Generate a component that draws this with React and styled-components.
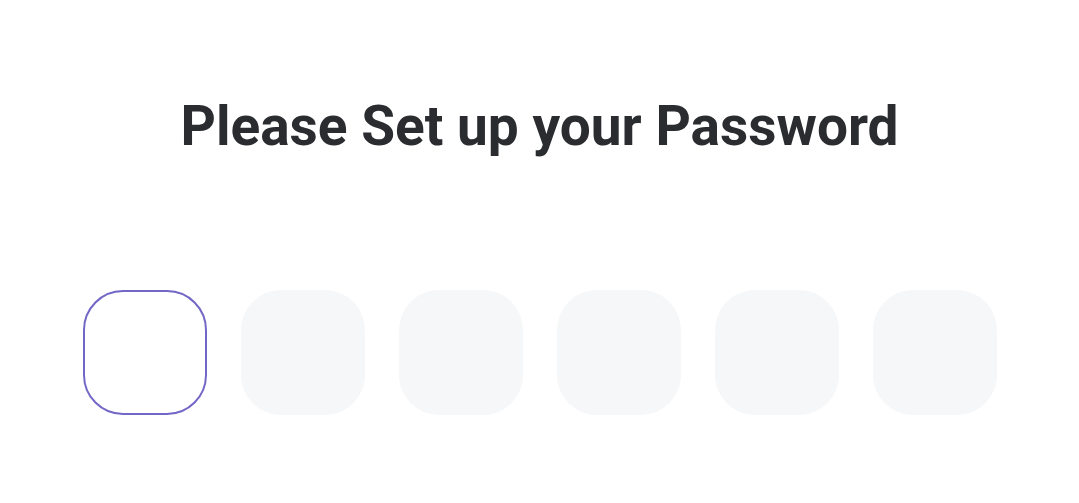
import React from "react";
import styled, { createGlobalStyle } from "styled-components";

const Global = createGlobalStyle`
  html, body { margin: 0; padding: 0; background: #ffffff; }
  body { font-family: Roboto, "Liberation Sans", sans-serif; }
`;

const Page = styled.main`
  width: 1079px;
  height: 503px;
  display: flex;
  flex-direction: column;
  align-items: center;
  box-sizing: border-box;
  padding-top: 93px;
`;

const Title = styled.h1`
  margin: 0;
  font-family: Roboto, "Liberation Sans", sans-serif;
  font-weight: 700;
  font-size: 55px;
  line-height: 66px;
  color: #2a2c30;
`;

const Boxes = styled.div`
  margin-top: 131px;
  display: flex;
  gap: 34px;
`;

const Cell = styled.input`
  width: 124px;
  height: 125px;
  box-sizing: border-box;
  border-radius: 40px;
  border: 2px solid ${(p) => (p.$active ? "#7266c6" : "transparent")};
  background: ${(p) => (p.$active ? "#ffffff" : "#f6f7f9")};
  outline: none;
  font-family: Roboto, sans-serif;
  font-size: 40px;
  text-align: center;
  color: #2a2c30;
  padding: 0;
`;

export default function App() {
  return (
    <>
      <Global />
      <Page>
        <Title>Please Set up your Password</Title>
        <Boxes>
          {[0, 1, 2, 3, 4, 5].map((i) => (
            <Cell key={i} type="password" maxLength={1} $active={i === 0} readOnly />
          ))}
        </Boxes>
      </Page>
    </>
  );
}
